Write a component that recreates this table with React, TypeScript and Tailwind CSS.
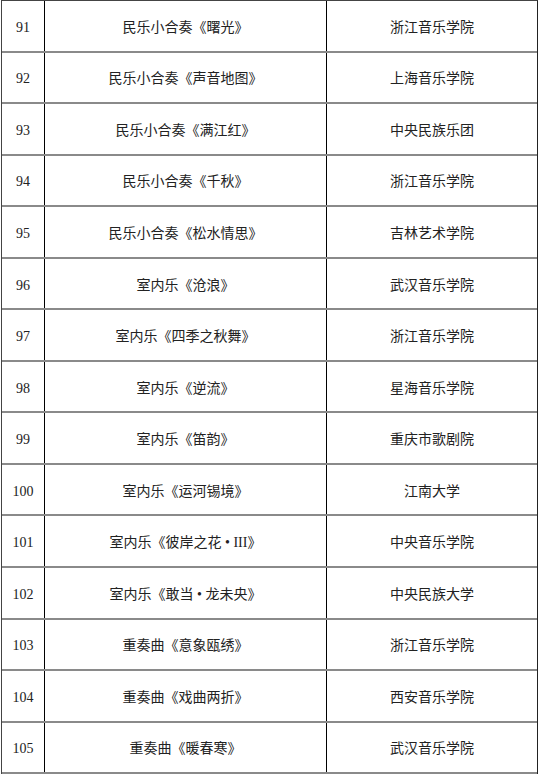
import React from 'react';

const rows: [string, string, string][] = [
  ['91', '民乐小合奏《曙光》', '浙江音乐学院'],
  ['92', '民乐小合奏《声音地图》', '上海音乐学院'],
  ['93', '民乐小合奏《满江红》', '中央民族乐团'],
  ['94', '民乐小合奏《千秋》', '浙江音乐学院'],
  ['95', '民乐小合奏《松水情思》', '吉林艺术学院'],
  ['96', '室内乐《沧浪》', '武汉音乐学院'],
  ['97', '室内乐《四季之秋舞》', '浙江音乐学院'],
  ['98', '室内乐《逆流》', '星海音乐学院'],
  ['99', '室内乐《笛韵》', '重庆市歌剧院'],
  ['100', '室内乐《运河锡境》', '江南大学'],
  ['101', '室内乐《彼岸之花 • III》', '中央音乐学院'],
  ['102', '室内乐《敢当 • 龙未央》', '中央民族大学'],
  ['103', '重奏曲《意象瓯绣》', '浙江音乐学院'],
  ['104', '重奏曲《戏曲两折》', '西安音乐学院'],
  ['105', '重奏曲《暖春寒》', '武汉音乐学院'],
];

const App = () => {
  return (
    <div className="w-[540px] h-[777px] bg-white overflow-hidden" style={{ fontFamily: '"Liberation Serif", "Noto Sans CJK SC", serif' }}>
      <div className="ml-[1px] w-[537px] border-t border-l border-r border-t-[#444] border-l-[#444] border-r-[#222] text-[14px] text-[#222]">
        {rows.map(r => (
          <div key={r[0]} className="flex h-[51.55px] border-b-2 border-[#8a8a8a]">
            <div className="w-[43px] flex items-center justify-center pt-[3px] border-r border-black">{r[0]}</div>
            <div className="w-[282px] flex items-center justify-center pt-[3px] border-r border-black whitespace-pre">{r[1]}</div>
            <div className="flex-1 flex items-center justify-center pt-[3px]">{r[2]}</div>
          </div>
        ))}
      </div>
    </div>
  );
};
export default App;
